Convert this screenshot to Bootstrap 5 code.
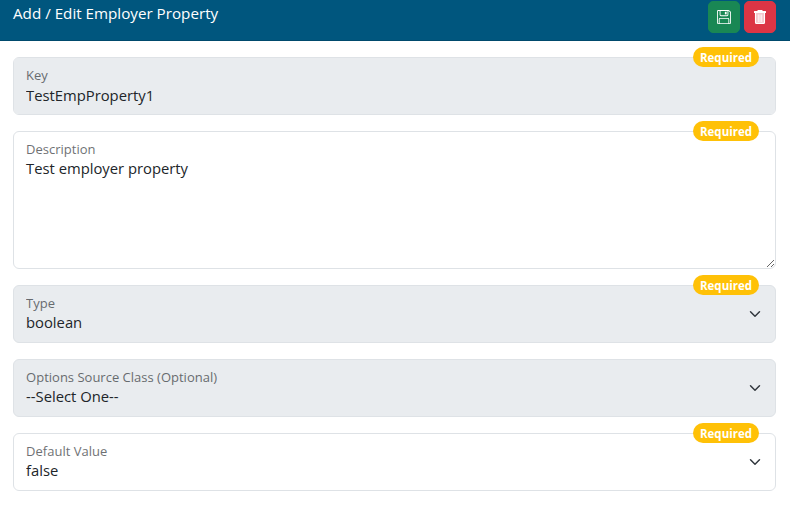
<!DOCTYPE html>
<html lang="en">
<head>
    <meta charset="UTF-8">
    <title>Add / Edit Employer Property</title>
    <link href="https://cdn.jsdelivr.net/npm/bootstrap@5.3.0/dist/css/bootstrap.min.css" rel="stylesheet">
    <style>
        body {
            font-family: "Open Sans", "Noto Sans", sans-serif;
            overflow: hidden;
            color: #212529;
        }

        .page-head {
            background: #00567e;
            height: 41px;
            padding: 0 14px 0 13px;
            border-bottom: 1px solid #004a6d;
        }

        .page-title {
            font-size: 15.2px;
            line-height: 1;
            margin-top: 6px;
            color: #fff;
        }

        .head-btn {
            width: 32px;
            height: 32px;
            margin-top: 1px;
            padding: 0;
            display: flex;
            align-items: center;
            justify-content: center;
            border-radius: 5px;
        }

        .prop-form {
            padding: 16px 14px 0 13px;
        }

        .prop-form .form-control,
        .prop-form .form-select {
            font-size: 14.8px;
        }

        .prop-form .form-floating > .form-control {
            padding-top: 27px;
            padding-bottom: 9px;
        }

        .prop-form .form-floating > label,
        .prop-form .form-floating > .form-control:disabled ~ label,
        .prop-form .form-floating > .form-select:disabled ~ label {
            font-size: 15.3px;
            padding-top: 17px;
            color: #212529;
        }

        .prop-form textarea.form-control {
            height: 138px;
        }

        .req-pill {
            position: absolute;
            top: -10px;
            right: 17px;
            z-index: 5;
            width: 66px;
            height: 20px;
            padding: 0;
            line-height: 21px;
            font-size: 11.5px;
            color: #fff;
            background: #ffc107;
        }
    </style>
</head>
<body>
    <!-- Header -->
    <div class="page-head d-flex justify-content-between">
        <div class="page-title">Add / Edit Employer Property</div>
        <div class="d-flex gap-1">
            <button type="button" class="btn btn-success head-btn" aria-label="Save">
                <svg width="14" height="14" viewBox="0 0 16 16" fill="#fff">
                    <path d="M11 2H9v3h2V2Z"/>
                    <path d="M1.5 0h11.586a1.5 1.5 0 0 1 1.06.44l1.415 1.414A1.5 1.5 0 0 1 16 2.914V14.5a1.5 1.5 0 0 1-1.5 1.5h-13A1.5 1.5 0 0 1 0 14.5v-13A1.5 1.5 0 0 1 1.5 0ZM1 1.5v13a.5.5 0 0 0 .5.5H2v-4.5A1.5 1.5 0 0 1 3.5 9h9a1.5 1.5 0 0 1 1.5 1.5V15h.5a.5.5 0 0 0 .5-.5V2.914a.5.5 0 0 0-.146-.353l-1.415-1.415A.5.5 0 0 0 13.086 1H13v4.5A1.5 1.5 0 0 1 11.5 7h-7A1.5 1.5 0 0 1 3 5.5V1H1.5a.5.5 0 0 0-.5.5Zm3 4a.5.5 0 0 0 .5.5h7a.5.5 0 0 0 .5-.5V1H4v4.5ZM3 15h10v-4.5a.5.5 0 0 0-.5-.5h-9a.5.5 0 0 0-.5.5V15Z"/>
                </svg>
            </button>
            <button type="button" class="btn btn-danger head-btn" aria-label="Delete">
                <svg width="12" height="14" viewBox="0 0 12 14">
                    <path fill="#fff" d="M4 0h4a.6.6 0 0 1 .6.6V1H11.5a.5.5 0 0 1 .5.5V3H0V1.500a.5.5 0 0 1 .5-.5H3.400V.6A.6.6 0 0 1 4 0Z"/>
                    <path fill="#f4c6cc" d="M1.500 3h9v9.500a1 1 0 0 1-1 1h-7a1 1 0 0 1-1-1Z"/>
                    <path fill="none" stroke="#fff" stroke-width="1.100" d="M1.500 3v9.400a1 1 0 0 0 1 1h7a1 1 0 0 0 1-1V3"/>
                    <path fill="none" stroke="#fff" stroke-width=".8" d="M4.300 4.500v7.500M6 4.500v7.500M7.700 4.500v7.500"/>
                </svg>
            </button>
        </div>
    </div>

    <!-- Form -->
    <form class="prop-form d-flex flex-column gap-3">
        <div class="form-floating position-relative">
            <input type="text" class="form-control" id="propKey" value="TestEmpProperty1" disabled>
            <label for="propKey">Key</label>
            <span class="badge rounded-pill req-pill">Required</span>
        </div>

        <div class="form-floating position-relative">
            <textarea class="form-control" id="propDesc">Test employer property</textarea>
            <label for="propDesc">Description</label>
            <span class="badge rounded-pill req-pill">Required</span>
        </div>

        <div class="form-floating position-relative">
            <select class="form-select" id="propType" disabled>
                <option selected>boolean</option>
            </select>
            <label for="propType">Type</label>
            <span class="badge rounded-pill req-pill">Required</span>
        </div>

        <div class="form-floating position-relative">
            <select class="form-select" id="propSource" disabled>
                <option selected>--Select One--</option>
            </select>
            <label for="propSource">Options Source Class (Optional)</label>
        </div>

        <div class="form-floating position-relative">
            <select class="form-select" id="propDefault">
                <option selected>false</option>
                <option>true</option>
            </select>
            <label for="propDefault">Default Value</label>
            <span class="badge rounded-pill req-pill">Required</span>
        </div>
    </form>

    <script src="https://cdn.jsdelivr.net/npm/bootstrap@5.3.0/dist/js/bootstrap.bundle.min.js"></script>
</body>
</html>
